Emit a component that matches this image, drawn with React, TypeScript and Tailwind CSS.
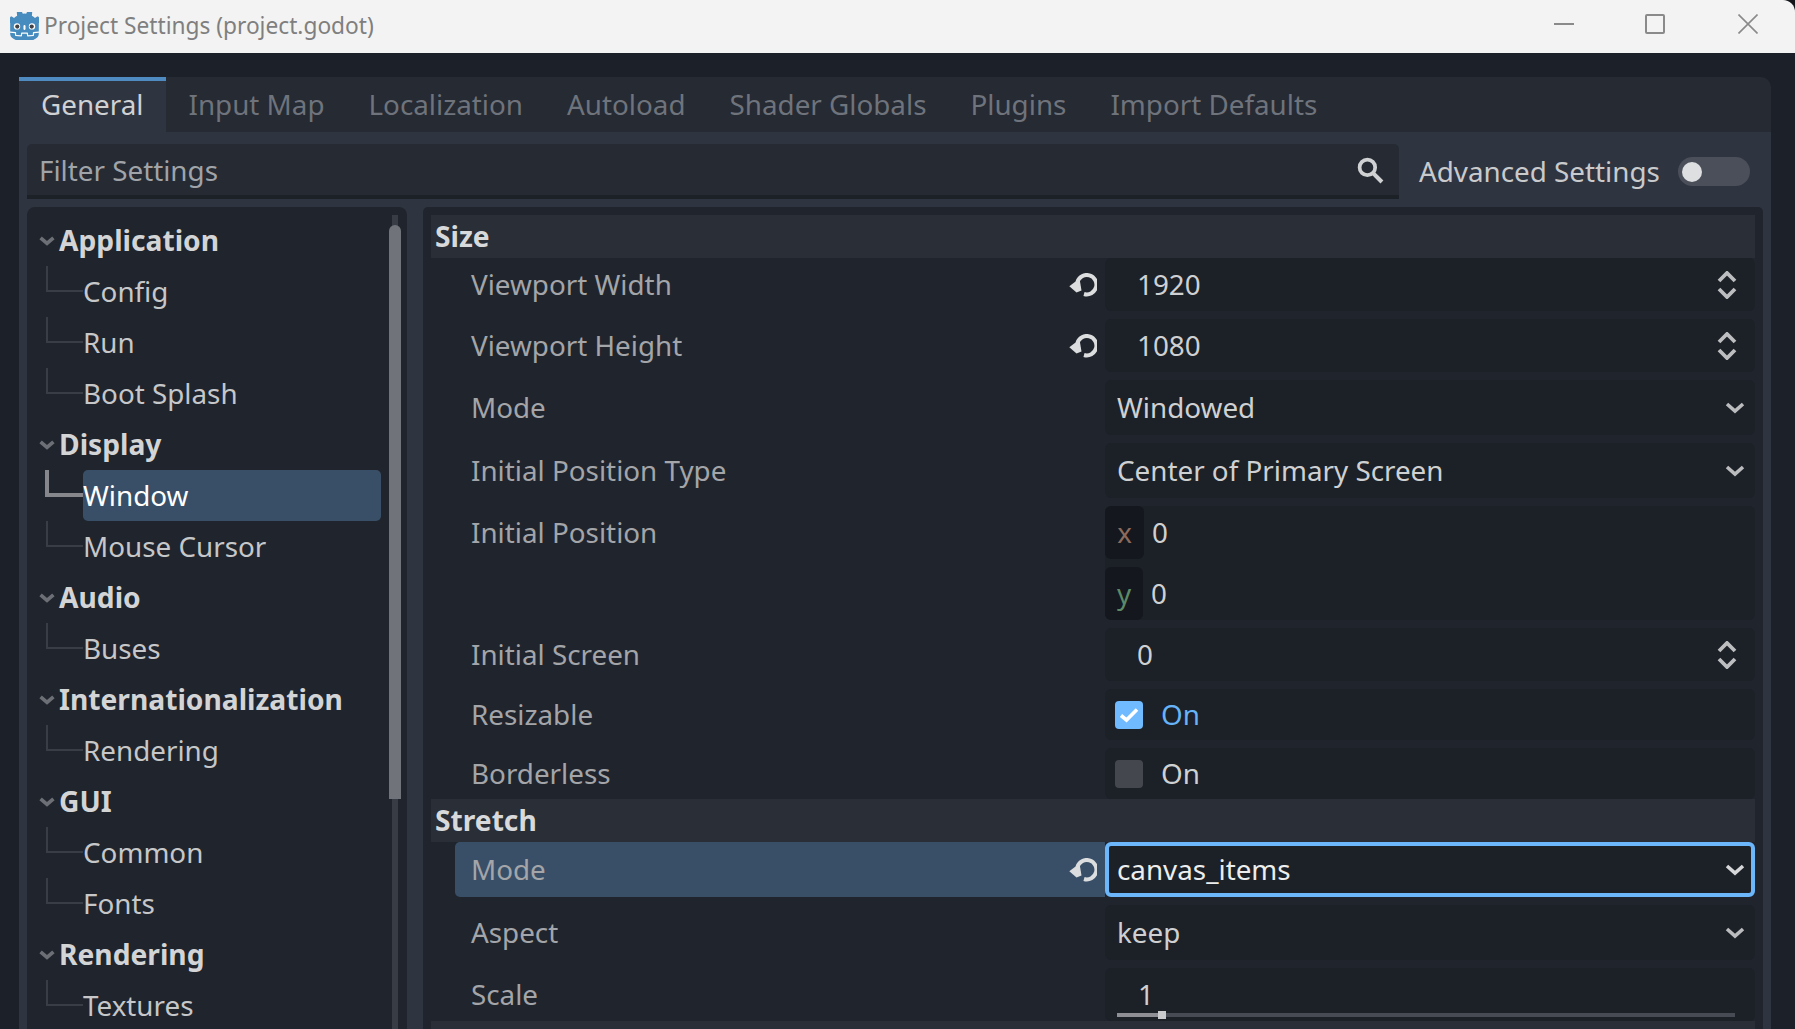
import type { ReactNode } from "react";

const treeRows = [
  { label: "Application", section: true },
  { label: "Config" },
  { label: "Run" },
  { label: "Boot Splash" },
  { label: "Display", section: true },
  { label: "Window", selected: true },
  { label: "Mouse Cursor" },
  { label: "Audio", section: true },
  { label: "Buses" },
  { label: "Internationalization", section: true },
  { label: "Rendering" },
  { label: "GUI", section: true },
  { label: "Common" },
  { label: "Fonts" },
  { label: "Rendering", section: true },
  { label: "Textures" },
];

const tabs = ["Input Map", "Localization", "Autoload", "Shader Globals", "Plugins", "Import Defaults"];

function GodotLogo() {
  return (
    <svg viewBox="100 120 824 790" className="h-[28px] w-[29px] shrink-0">
      <path fill="#fff" d="M105 673v33q407 354 814 0v-33z" />
      <path
        fill="#478cbf"
        d="m105 673 152 14q12 1 15 14l4 67 132 10 8-61q2-11 15-15h162q13 4 15 15l8 61 132-10 4-67q3-13 15-14l152-14V427q30-39 56-81-35-59-83-108-43 20-82 47-40-37-88-64 7-51 8-102-59-28-123-42-26 43-46 89-49-7-98 0-20-46-46-89-64 14-123 42 1 51 8 102-48 27-88 64-39-27-82-47-48 49-83 108 26 42 56 81zm0 33v39c0 276 813 276 813 0v-39l-134 12-5 69q-2 10-14 13l-162 11q-12 0-16-11l-10-65H447l-10 65q-4 11-16 11l-162-11q-12-3-14-13l-5-69z"
      />
      <path fill="#fff" d="M483 600c3 34 55 34 58 0v-86c-3-34-55-34-58 0z" />
      <circle cx="725" cy="526" r="90" fill="#fff" />
      <circle cx="299" cy="526" r="90" fill="#fff" />
      <circle cx="307" cy="532" r="60" fill="#414042" />
      <circle cx="717" cy="532" r="60" fill="#414042" />
    </svg>
  );
}

function ResetIcon() {
  return (
    <svg viewBox="0 0 28 24" className="mr-[8px] h-[24px] w-[28px] shrink-0">
      <path d="M8.4 9A9.7 9.7 0 1 1 15 21" fill="none" stroke="#dcdddf" strokeWidth="4" />
      <path d="M0.3 13.3L10.5 5.5L12.5 17.5L7.5 19.5z" fill="#dcdddf" />
    </svg>
  );
}

function Chevron({ className, stroke = 3.6 }: { className: string; stroke?: number }) {
  return (
    <svg viewBox="0 0 20 12" className={className}>
      <path d="M2 2L10 9L18 2" fill="none" stroke="currentColor" strokeWidth={stroke} />
    </svg>
  );
}

function SpinIcon() {
  return (
    <svg viewBox="0 0 20 28" className="mr-[18px] ml-auto h-[28px] w-[20px] text-[#bdbec0]">
      <path d="M2 10L10 2L18 10" fill="none" stroke="currentColor" strokeWidth="3.8" />
      <path d="M2 18L10 26L18 18" fill="none" stroke="currentColor" strokeWidth="3.8" />
    </svg>
  );
}

function Row({
  label,
  reset,
  selected,
  tall,
  children,
}: {
  label: string;
  reset?: boolean;
  selected?: boolean;
  tall?: string;
  children: ReactNode;
}) {
  return (
    <div className={`mt-2 flex first:mt-0 ${tall ?? "h-[53px]"}`}>
      <div
        className={`ml-[24px] flex h-full flex-1 rounded-l-[5px] ${selected ? "bg-[#394f67]" : ""}`}
      >
        <div
          className={`flex flex-1 items-center pl-[16px] text-[#a3a5a9] ${tall === "h-[114px]" ? "h-[53px]" : "h-full"}`}
        >
          <span className="mb-[2px]">{label}</span>
        </div>
        {reset && (
          <div className="flex h-full items-center">
            <ResetIcon />
          </div>
        )}
      </div>
      {children}
    </div>
  );
}

function SpinField({ value }: { value: string }) {
  return (
    <div className="flex h-full w-[650px] items-center rounded-[6px] bg-[#1c2027] pl-[32px] text-[#cfd0d2]">
      <span className="mb-[2px]">{value}</span>
      <SpinIcon />
    </div>
  );
}

function OptionField({ value, focused }: { value: string; focused?: boolean }) {
  return (
    <div
      className={`flex h-full w-[650px] items-center rounded-[6px] bg-[#1c2027] ${
        focused ? "border-4 border-[#6cb7fb] pl-[8px] text-[#eceded]" : "pl-[12px] text-[#cfd0d2]"
      }`}
    >
      <span className="mb-[2px]">{value}</span>
      <Chevron
        className={`ml-auto h-[12px] w-[20px] ${focused ? "mr-[6px] text-[#d6d7d8]" : "mr-[10px] text-[#bbbcbe]"}`}
      />
    </div>
  );
}

function SectionHeader({ label }: { label: string }) {
  return (
    <div className="flex h-[43px] shrink-0 items-center bg-[#2a2e37] pb-[2px] pl-[4px] text-[28.2px] font-bold text-[#d8d9db]">
      {label}
    </div>
  );
}

export default function App() {
  return (
    <div className="flex h-screen flex-col overflow-hidden bg-[#14161b] font-['Noto_Sans',sans-serif] text-[27.8px] leading-[26px]">
      {/* window title bar */}
      <div className="flex h-[53px] shrink-0 items-center rounded-tr-[12px] bg-[#f3f3f3]">
        <div className="mb-[2px] ml-[10px]">
          <GodotLogo />
        </div>
        <span className="mb-[2px] ml-[5px] text-[22.7px] text-[#7f7f7f]">Project Settings (project.godot)</span>
        <div className="mr-[37px] mb-[5px] ml-auto flex items-center">
          <div className="h-[2px] w-[20px] bg-[#8a8a8a]" />
          <div className="ml-[71px] h-[20px] w-[20px] rounded-[2px] border-2 border-[#8a8a8a]" />
          <svg viewBox="0 0 20 20" className="ml-[73px] h-[20px] w-[20px]">
            <path d="M0.5 0.5L19.5 19.5M19.5 0.5L0.5 19.5" stroke="#8a8a8a" strokeWidth="1.6" />
          </svg>
        </div>
      </div>

      <div className="flex min-h-0 flex-1 flex-col bg-[#1c2028] pt-[24px] pr-[24px] pl-[19px]">
        {/* tab bar */}
        <div className="flex h-[55px] shrink-0 rounded-tr-[10px] bg-[#252a33] text-[#6f737b]">
          <div className="flex items-center border-t-4 border-[#4f8ac1] bg-[#2f3441] pr-[23px] pb-[6px] pl-[22px] text-[#d0d1d3]">
            General
          </div>
          {tabs.map((t) => (
            <div key={t} className="flex items-center px-[22px] pb-[2px]">
              {t}
            </div>
          ))}
        </div>

        <div className="flex min-h-0 flex-1 flex-col bg-[#2f3441] px-[8px] pt-[12px]">
          {/* filter */}
          <div className="flex h-[55px] shrink-0 items-stretch">
            <div className="flex w-[1372px] items-center rounded-t-[5px] border-b-4 border-[#1c2027] bg-[#252a33] pl-[12px] text-[#a0a3a8]">
              Filter Settings
              <svg viewBox="0 0 26 26" className="mt-[2px] mr-[15px] ml-auto h-[27px] w-[27px]">
                <circle cx="10" cy="10" r="7.5" fill="none" stroke="#d0d1d3" strokeWidth="3.6" />
                <path d="M15.5 15.5L24 24" stroke="#d0d1d3" strokeWidth="4" />
              </svg>
            </div>
            <div className="ml-[20px] flex items-center pb-[2px] text-[#c9cacc]">Advanced Settings</div>
            <div className="ml-[18px] flex items-center">
              <div className="flex h-[29px] w-[72px] items-center rounded-full bg-[#4b4f59] pl-[4px]">
                <div className="h-[20px] w-[20px] rounded-full bg-[#dedfe1]" />
              </div>
            </div>
          </div>

          <div className="mt-2 flex min-h-0 flex-1 gap-4">
            {/* tree */}
            <div className="relative w-[380px] shrink-0 overflow-hidden rounded-t-[8px] bg-[#20242c] pt-[8px]">
              {treeRows.map((r, i) =>
                r.section ? (
                  <div
                    key={i}
                    className="flex h-[51px] items-center pl-[12px] text-[28.2px] font-bold text-[#d3d4d6]"
                  >
                    <Chevron className="h-[10px] w-[16px] text-[#6c6f75]" stroke={4.6} />
                    <span className="mb-[2px] ml-[4px]">{r.label}</span>
                  </div>
                ) : (
                  <div key={i} className="flex h-[51px] pr-[26px] pl-[18px] text-[#c6c7c9]">
                    {r.selected ? (
                      <div className="h-[27px] w-[38px] shrink-0 border-b-4 border-l-4 border-[#85878c]" />
                    ) : (
                      <div className="ml-[1px] h-[26px] w-[37px] shrink-0 border-b-2 border-l-2 border-[#393d46]" />
                    )}
                    <div
                      className={`flex flex-1 items-center rounded-[5px] pb-[2px] ${
                        r.selected ? "bg-[#394f67] text-white" : ""
                      }`}
                    >
                      {r.label}
                    </div>
                  </div>
                ),
              )}
              <div className="absolute top-[8px] bottom-0 left-[365px] w-[6px] bg-[#383c45]" />
              <div className="absolute top-[18px] left-[362px] h-[574px] w-[12px] rounded-t-[6px] bg-[#70737a]" />
            </div>

            {/* inspector */}
            <div className="flex min-w-0 flex-1 flex-col overflow-hidden rounded-t-[5px] bg-[#20242c] px-[8px] pt-[8px]">
              <SectionHeader label="Size" />
              <div className="flex flex-col">
                <Row label="Viewport Width" reset>
                  <SpinField value="1920" />
                </Row>
                <Row label="Viewport Height" reset>
                  <SpinField value="1080" />
                </Row>
                <Row label="Mode" tall="h-[55px]">
                  <OptionField value="Windowed" />
                </Row>
                <Row label="Initial Position Type" tall="h-[55px]">
                  <OptionField value="Center of Primary Screen" />
                </Row>
                <Row label="Initial Position" tall="h-[114px]">
                  <div className="flex h-full w-[650px] flex-col justify-between rounded-[6px] bg-[#1c2027] text-[#cfd0d2]">
                    <div className="flex h-[53px] items-center">
                      <div className="flex h-full w-[39px] items-center justify-center rounded-[6px] bg-[#14171d] pb-[2px] text-[#8c6b5c]">
                        x
                      </div>
                      <span className="mb-[2px] ml-[8px]">0</span>
                    </div>
                    <div className="flex h-[53px] items-center">
                      <div className="flex h-full w-[38px] items-center justify-center rounded-[6px] bg-[#14171d] pb-[2px] text-[#5c8a68]">
                        y
                      </div>
                      <span className="mb-[2px] ml-[8px]">0</span>
                    </div>
                  </div>
                </Row>
                <Row label="Initial Screen">
                  <SpinField value="0" />
                </Row>
                <Row label="Resizable" tall="h-[51px]">
                  <div className="flex h-full w-[650px] items-center rounded-[6px] bg-[#1c2027] pl-[10px] text-[#66b3f7]">
                    <div className="flex h-[28px] w-[28px] items-center justify-center rounded-[4px] bg-[#70bbff]">
                      <svg viewBox="0 0 20 16" className="h-[16px] w-[20px]">
                        <path d="M2 8.5L7.5 13L18 2.5" fill="none" stroke="#fff" strokeWidth="3.6" />
                      </svg>
                    </div>
                    <span className="mb-[2px] ml-[18px]">On</span>
                  </div>
                </Row>
                <Row label="Borderless" tall="h-[51px]">
                  <div className="flex h-full w-[650px] items-center rounded-[6px] bg-[#1c2027] pl-[10px] text-[#cfd0d2]">
                    <div className="h-[28px] w-[28px] rounded-[4px] bg-[#44484e]" />
                    <span className="mb-[2px] ml-[18px]">On</span>
                  </div>
                </Row>
              </div>
              <SectionHeader label="Stretch" />
              <div className="flex flex-col">
                <Row label="Mode" reset selected tall="h-[55px]">
                  <OptionField value="canvas_items" focused />
                </Row>
                <Row label="Aspect" tall="h-[55px]">
                  <OptionField value="keep" />
                </Row>
                <Row label="Scale">
                  <div className="relative flex h-full w-[650px] items-center rounded-[6px] bg-[#1c2027] pl-[33px] text-[#cfd0d2]">
                    <span className="mb-[2px]">1</span>
                    <div className="absolute right-[20px] bottom-[4px] left-[12px] h-[4px] bg-[#474b54]">
                      <div className="h-full w-[41px] bg-[#8d8f94]" />
                      <div className="absolute top-[-2px] left-[41px] h-[8px] w-[8px] bg-[#c9cacc]" />
                    </div>
                  </div>
                </Row>
              </div>
              <div className="h-[43px] shrink-0 bg-[#2a2e37]" />
            </div>
          </div>
        </div>
      </div>
    </div>
  );
}
